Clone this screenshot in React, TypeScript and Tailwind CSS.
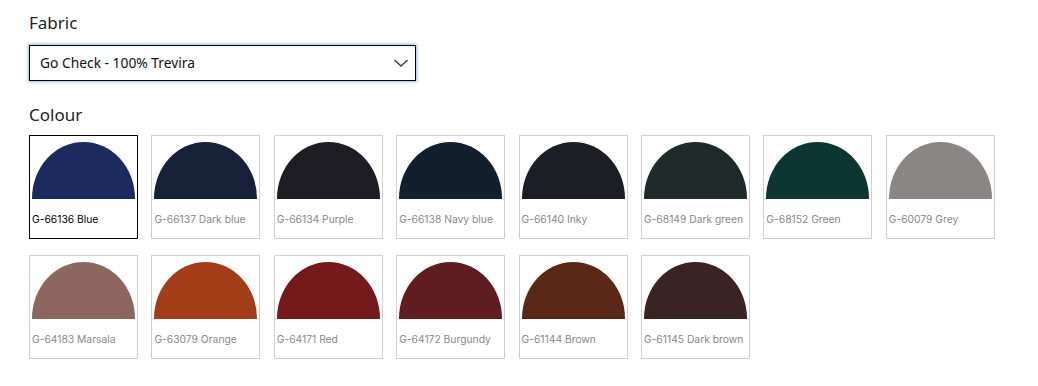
import React from "react";

const colours = [
  { code: "G-66136 Blue", c: "#1b2b5f" },
  { code: "G-66137 Dark blue", c: "#18213a" },
  { code: "G-66134 Purple", c: "#1e1d24" },
  { code: "G-66138 Navy blue", c: "#121f2f" },
  { code: "G-66140 Inky", c: "#1b1e24" },
  { code: "G-68149 Dark green", c: "#1f2a2a" },
  { code: "G-68152 Green", c: "#0d3534" },
  { code: "G-60079 Grey", c: "#8a8684" },
  { code: "G-64183 Marsala", c: "#8e6660" },
  { code: "G-63079 Orange", c: "#a33d18" },
  { code: "G-64171 Red", c: "#741a1a" },
  { code: "G-64172 Burgundy", c: "#5f1c21" },
  { code: "G-61144 Brown", c: "#5b2818" },
  { code: "G-61145 Dark brown", c: "#3b2223" },
];

export default function App() {
  return (
    <div
      className="w-[1038px] h-[386px] bg-white pl-[29px] pt-[12px]"
      style={{ fontFamily: "'Noto Sans', Inter, sans-serif" }}
    >
      <div className="text-[17px] leading-[22px] text-[#222]">Fabric</div>
      <div className="mt-[11px] w-[387px] h-[36px] border border-black shadow-[0_0_3px_1px_rgba(80,140,200,0.6)] flex items-center justify-between pl-[10px] pr-[6px]">
        <span className="text-[13.8px] text-[#111]">Go Check - 100% Trevira</span>
        <svg width="16" height="10" viewBox="0 0 16 10" fill="none">
          <path d="M1.5 2L8 8L14.5 2" stroke="#444" strokeWidth="1.5" />
        </svg>
      </div>
      <div className="mt-[23px] text-[17px] leading-[22px] text-[#222]">Colour</div>
      <div className="mt-[9px] grid grid-cols-[repeat(8,109px)] gap-x-[13.4px] gap-y-[16px]">
        {colours.map((col, i) => (
          <div
            key={col.code}
            className={
              "h-[104px] border px-[2px] pt-[6px] " +
              (i === 0 ? "border-black" : "border-[#d0d0d0]")
            }
          >
            <div
              className="w-[103px] h-[57px] rounded-tl-[52px_57px] rounded-tr-[52px_57px]"
              style={{ backgroundColor: col.c }}
            />
            <div
              className={
                "mt-[13px] text-[10.3px] leading-[14px] whitespace-nowrap " +
                (i === 0 ? "text-black" : "text-[#888]")
              }
              style={{ fontFamily: "Inter, sans-serif" }}
            >
              {col.code}
            </div>
          </div>
        ))}
      </div>
    </div>
  );
}
